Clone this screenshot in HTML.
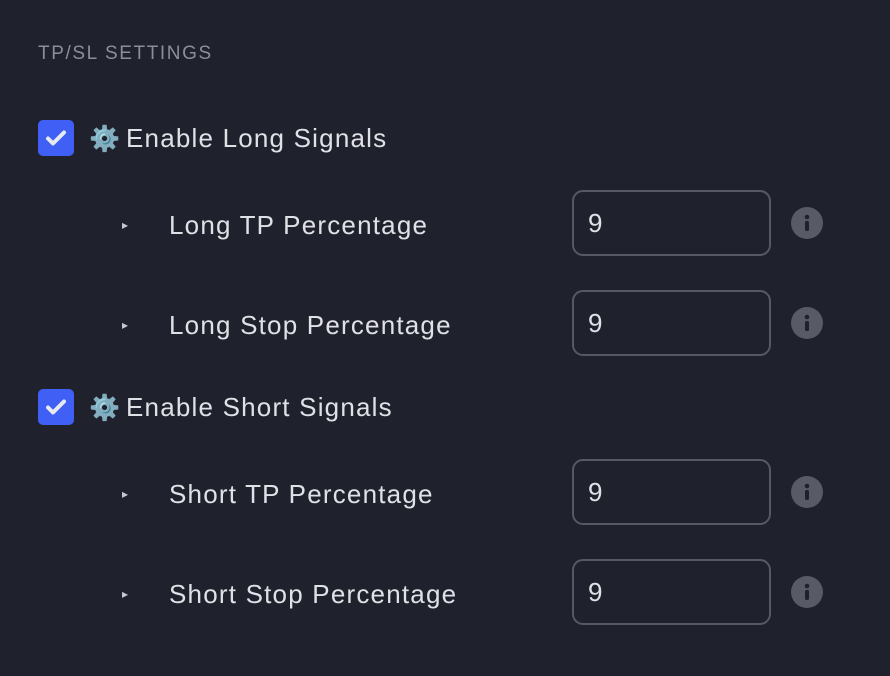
<!DOCTYPE html>
<html><head><style>
body{margin:0;width:890px;height:676px;background:#1f212c;font-family:"Liberation Sans","DejaVu Sans",sans-serif;color:#e0e1e6;position:relative;overflow:hidden}
.a{position:absolute}
.h{left:38px;top:43px;font-size:19px;color:#8b8d97;letter-spacing:1.6px}
.cb{width:36px;height:36px;background:#3f5ff5;border-radius:5px}
.lbl{font-size:26px;white-space:nowrap;letter-spacing:1.2px}
.tri{font-size:12px;color:#c9cad0}
.in{width:199px;height:66px;border:2px solid #565862;border-radius:11px;box-sizing:border-box;left:572px;font-size:26px;padding-left:14px;line-height:62px}
.i{width:32px;height:32px;border-radius:50%;background:#585a66;left:791px}
.g{position:absolute;left:89px;font-size:25px;letter-spacing:0}
</style></head><body>
<div class="a h">TP/SL SETTINGS</div>

<div class="a cb" style="left:38px;top:120px"><svg width="36" height="36"><path d="M10 18.5l5 5 11-11" stroke="#e8eaf2" stroke-width="4" fill="none" stroke-linecap="round" stroke-linejoin="round"/></svg></div>
<div class="g" style="top:125px">⚙️</div>
<div class="a lbl" style="left:126px;top:123px">Enable Long Signals</div>

<div class="a tri" style="left:122px;top:218px">▸</div>
<div class="a lbl" style="left:169px;top:210px">Long TP Percentage</div>
<div class="a in" style="top:190px">9</div>
<div class="a i" style="top:207px"><svg width="32" height="32"><circle cx="16" cy="10" r="2.3" fill="#1f212c"/><rect x="14" y="14" width="4" height="10" rx="1.5" fill="#1f212c"/></svg></div>

<div class="a tri" style="left:122px;top:318px">▸</div>
<div class="a lbl" style="left:169px;top:310px">Long Stop Percentage</div>
<div class="a in" style="top:290px">9</div>
<div class="a i" style="top:307px"><svg width="32" height="32"><circle cx="16" cy="10" r="2.3" fill="#1f212c"/><rect x="14" y="14" width="4" height="10" rx="1.5" fill="#1f212c"/></svg></div>

<div class="a cb" style="left:38px;top:389px"><svg width="36" height="36"><path d="M10 18.5l5 5 11-11" stroke="#e8eaf2" stroke-width="4" fill="none" stroke-linecap="round" stroke-linejoin="round"/></svg></div>
<div class="g" style="top:394px">⚙️</div>
<div class="a lbl" style="left:126px;top:392px">Enable Short Signals</div>

<div class="a tri" style="left:122px;top:487px">▸</div>
<div class="a lbl" style="left:169px;top:479px">Short TP Percentage</div>
<div class="a in" style="top:459px">9</div>
<div class="a i" style="top:476px"><svg width="32" height="32"><circle cx="16" cy="10" r="2.3" fill="#1f212c"/><rect x="14" y="14" width="4" height="10" rx="1.5" fill="#1f212c"/></svg></div>

<div class="a tri" style="left:122px;top:587px">▸</div>
<div class="a lbl" style="left:169px;top:579px">Short Stop Percentage</div>
<div class="a in" style="top:559px">9</div>
<div class="a i" style="top:576px"><svg width="32" height="32"><circle cx="16" cy="10" r="2.3" fill="#1f212c"/><rect x="14" y="14" width="4" height="10" rx="1.5" fill="#1f212c"/></svg></div>
</body></html>
